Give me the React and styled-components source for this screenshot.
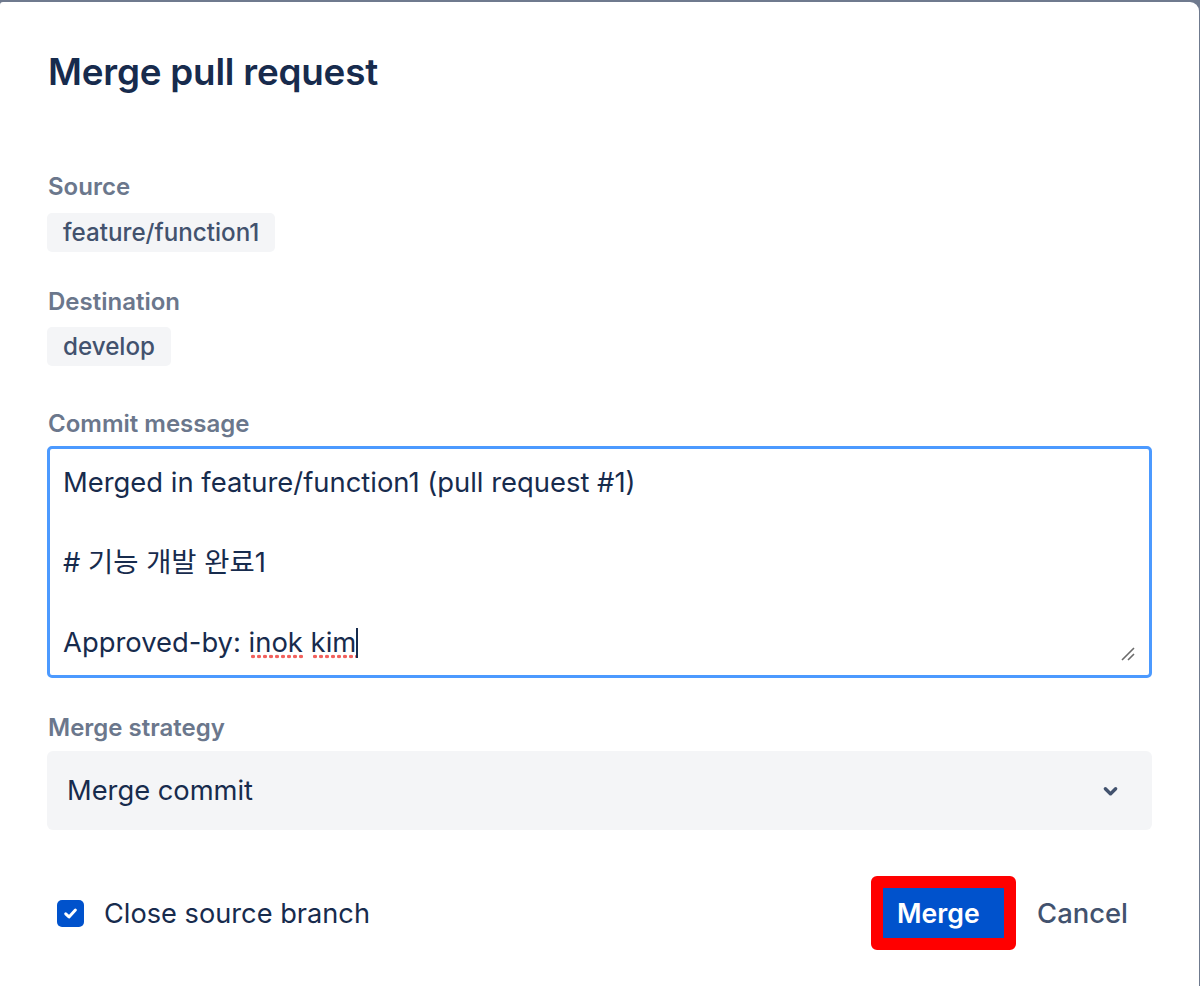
import styled, { createGlobalStyle } from 'styled-components';

const GlobalStyle = createGlobalStyle`
  html, body {
    margin: 0;
    padding: 0;
    background: #6f7a8e;
  }
  body {
    font-family: Inter, "Noto Sans", "Noto Sans CJK KR", sans-serif;
    -webkit-font-smoothing: antialiased;
  }
`;

const Backdrop = styled.div`
  width: 1200px;
  height: 986px;
  padding: 2px 1px 0 0;
  box-sizing: border-box;
  overflow: hidden;
`;

const Dialog = styled.div`
  height: 984px;
  background: #ffffff;
  border-radius: 3px 9px 0 0;
  padding: 0 47px 0 47px;
  box-sizing: border-box;
  display: flex;
  flex-direction: column;
`;

const Title = styled.h1`
  margin: 48px 0 0 1px;
  font-size: 36.8px;
  line-height: 44px;
  font-weight: 600;
  color: #172b4d;
  letter-spacing: -0.2px;
`;

const Field = styled.div`
  display: flex;
  flex-direction: column;
  align-items: flex-start;
  margin-top: ${(p) => p.$top}px;
`;

const Label = styled.label`
  margin-left: 1px;
  font-size: 24px;
  line-height: 24px;
  font-weight: 600;
  color: #6b778c;
  margin-bottom: ${(p) => p.$gap}px;
`;

const Chip = styled.span`
  display: inline-flex;
  align-items: center;
  height: 39px;
  padding: 0 16px;
  background: #f4f5f7;
  border-radius: 5px;
  font-size: 24.2px;
  font-weight: 500;
  color: #42526e;
`;

const CommitBox = styled.div`
  position: relative;
  width: 100%;
  height: 232px;
  flex-shrink: 0;
  box-sizing: border-box;
  border: 3px solid #4c9aff;
  border-radius: 5px;
  padding: 13px 13px;
  font-size: 27.4px;
  line-height: 40px;
  color: #172b4d;
`;

const Line = styled.div`
  height: 40px;
  white-space: pre;
`;

const Misspelled = styled.span`
  background-image: radial-gradient(circle, #f2615d 1.7px, transparent 2.1px);
  background-size: 6px 5px;
  background-repeat: repeat-x;
  background-position: 1px 100%;
`;

const Caret = styled.span`
  display: inline-block;
  width: 2px;
  height: 30px;
  background: #172b4d;
  vertical-align: -6px;
`;

const ResizeGrip = styled.svg`
  position: absolute;
  right: 13px;
  bottom: 13px;
`;

const Select = styled.div`
  width: 100%;
  height: 79px;
  flex-shrink: 0;
  box-sizing: border-box;
  background: #f4f5f7;
  border-radius: 6px;
  display: flex;
  align-items: center;
  justify-content: space-between;
  padding: 0 21px 0 20px;
  font-size: 27.3px;
  color: #172b4d;
`;

const Footer = styled.div`
  margin-top: 46px;
  height: 74px;
  display: flex;
  align-items: center;
  justify-content: space-between;
`;

const CheckRow = styled.div`
  display: flex;
  align-items: center;
  gap: 20px;
  padding-left: 10px;
  font-size: 27.2px;
  color: #172b4d;
`;

const Box = styled.span`
  width: 27px;
  height: 27px;
  border-radius: 5px;
  background: #0052cc;
  display: inline-flex;
  align-items: center;
  justify-content: center;
`;

const Actions = styled.div`
  display: flex;
  align-items: center;
`;

const Highlight = styled.div`
  border: 12px solid #ff0000;
  border-radius: 6px;
`;

const PrimaryButton = styled.button`
  width: 121px;
  height: 50px;
  border: none;
  background: #0052cc;
  color: #ffffff;
  font-family: inherit;
  font-size: 26.6px;
  font-weight: 600;
  text-align: left;
  padding: 0 0 0 14px;
`;

const SubtleButton = styled.button`
  border: none;
  background: transparent;
  font-family: inherit;
  font-size: 27.4px;
  font-weight: 500;
  color: #42526e;
  padding: 0 24px 0 21px;
  height: 50px;
`;

function App() {
  return (
    <Backdrop>
      <GlobalStyle />
      <Dialog>
        <Title>Merge pull request</Title>

        <Field $top={81}>
          <Label $gap={14}>Source</Label>
          <Chip>feature/function1</Chip>
        </Field>

        <Field $top={38}>
          <Label $gap={13}>Destination</Label>
          <Chip>develop</Chip>
        </Field>

        <Field $top={46}>
          <Label $gap={10}>Commit message</Label>
          <CommitBox>
            <Line>Merged in feature/function1 (pull request #1)</Line>
            <Line> </Line>
            <Line># 기능 개발 완료1</Line>
            <Line> </Line>
            <Line>
              Approved-by: <Misspelled>inok</Misspelled> <Misspelled>kim</Misspelled>
              <Caret />
            </Line>
            <ResizeGrip width="16" height="16" viewBox="0 0 16 16">
              <path d="M2 14 L14 2 M8 14 L14 8" stroke="#6b6b6b" strokeWidth="1.6" fill="none" />
            </ResizeGrip>
          </CommitBox>
        </Field>

        <Field $top={38}>
          <Label $gap={11}>Merge strategy</Label>
          <Select>
            <span>Merge commit</span>
            <svg width="41" height="41" viewBox="0 0 24 24">
              <path
                d="M8.292 10.293a1.009 1.009 0 000 1.419l2.939 2.965c.218.215.5.322.779.322s.556-.107.769-.322l2.93-2.955a1.01 1.01 0 000-1.419.987.987 0 00-1.406 0l-2.298 2.317-2.307-2.327a.99.99 0 00-1.406 0z"
                fill="#42526e"
              />
            </svg>
          </Select>
        </Field>

        <Footer>
          <CheckRow>
            <Box>
              <svg width="17" height="17" viewBox="0 0 16 16">
                <path d="M3.5 8.3 L6.6 11.2 L12.6 4.8" stroke="#ffffff" strokeWidth="2.8" strokeLinecap="round" strokeLinejoin="round" fill="none" />
              </svg>
            </Box>
            Close source branch
          </CheckRow>
          <Actions>
            <Highlight>
              <PrimaryButton>Merge</PrimaryButton>
            </Highlight>
            <SubtleButton>Cancel</SubtleButton>
          </Actions>
        </Footer>
      </Dialog>
    </Backdrop>
  );
}

export default App;
